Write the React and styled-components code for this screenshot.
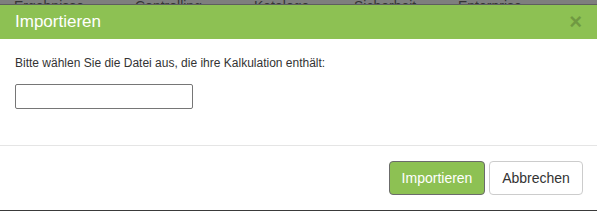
import React from "react";
import styled, { createGlobalStyle } from "styled-components";

const Global = createGlobalStyle`
  html, body { margin: 0; padding: 0; background: #3a3a3a; }
  body { font-family: "Liberation Sans", Arial, sans-serif; }
  #root { width: 597px; height: 211px; overflow: hidden; }
`;

const Page = styled.div`
  display: flex;
  flex-direction: column;
  width: 597px;
  height: 211px;
  background: #3a3a3a;
`;

const Nav = styled.div`
  height: 4px;
  overflow: hidden;
  background: #7e7e7e;
  border-bottom: 1px solid #5e5e5e;
  display: flex;
  align-items: flex-end;
`;

const NavItem = styled.span`
  flex: none;
  width: ${(p) => p.$w}px;
  padding-left: ${(p) => p.$pl}px;
  font-size: 14px;
  line-height: 14px;
  color: #353535;
  margin-bottom: -9px;
  white-space: nowrap;
`;

const Modal = styled.div`
  display: flex;
  flex-direction: column;
  background: #fff;
  height: 205px;
`;

const Header = styled.div`
  height: 34px;
  background: #8dc153;
  display: flex;
  align-items: center;
  justify-content: space-between;
  padding: 0 15px;
`;

const Title = styled.h4`
  margin: 0;
  font-size: 17px;
  font-weight: 400;
  color: #fff;
`;

const Close = styled.span`
  font-size: 22px;
  font-weight: 700;
  color: #000;
  opacity: 0.2;
  margin-right: 0px;
  line-height: 1;
`;

const Body = styled.div`
  padding: 17px 15px 0;
  height: 89px;
  border-bottom: 1px solid #e5e5e5;
`;

const Label = styled.p`
  margin: 0 0 14px;
  font-size: 12px;
  color: #333;
`;

const Input = styled.input`
  box-sizing: border-box;
  width: 178px;
  height: 25px;
  border: 1px solid #767676;
  border-radius: 2px;
  margin: 0;
  padding: 2px 4px;
`;

const Footer = styled.div`
  display: flex;
  justify-content: flex-end;
  gap: 4px;
  padding: 15px 14px 0;
`;

const Button = styled.button`
  box-sizing: border-box;
  height: 34px;
  width: ${(p) => p.$w}px;
  padding: 0;
  font-family: "Liberation Sans", Arial, sans-serif;
  font-size: 14px;
  border-radius: 4px;
  cursor: pointer;
  background: ${(p) => (p.$primary ? "#8dc153" : "#fff")};
  color: ${(p) => (p.$primary ? "#fff" : "#333")};
  border: 1px solid ${(p) => (p.$primary ? "#6b6b6b" : "#ccc")};
`;

export default function App() {
  return (
    <Page>
      <Global />
      <Nav>
        <NavItem $w={112} $pl={14}>Ergebnisse ▾</NavItem>
        <NavItem $w={113} $pl={9}>Controlling ▾</NavItem>
        <NavItem $w={96} $pl={6}>Kataloge ▾</NavItem>
        <NavItem $w={103} $pl={4}>Sicherheit ▾</NavItem>
        <NavItem $w={120} $pl={1}>Enterprise ▾</NavItem>
      </Nav>
      <Modal>
        <Header>
          <Title>Importieren</Title>
          <Close>×</Close>
        </Header>
        <Body>
          <Label>Bitte wählen Sie die Datei aus, die ihre Kalkulation enthält:</Label>
          <Input type="text" />
        </Body>
        <Footer>
          <Button $primary $w={96}>Importieren</Button>
          <Button $w={94}>Abbrechen</Button>
        </Footer>
      </Modal>
    </Page>
  );
}
